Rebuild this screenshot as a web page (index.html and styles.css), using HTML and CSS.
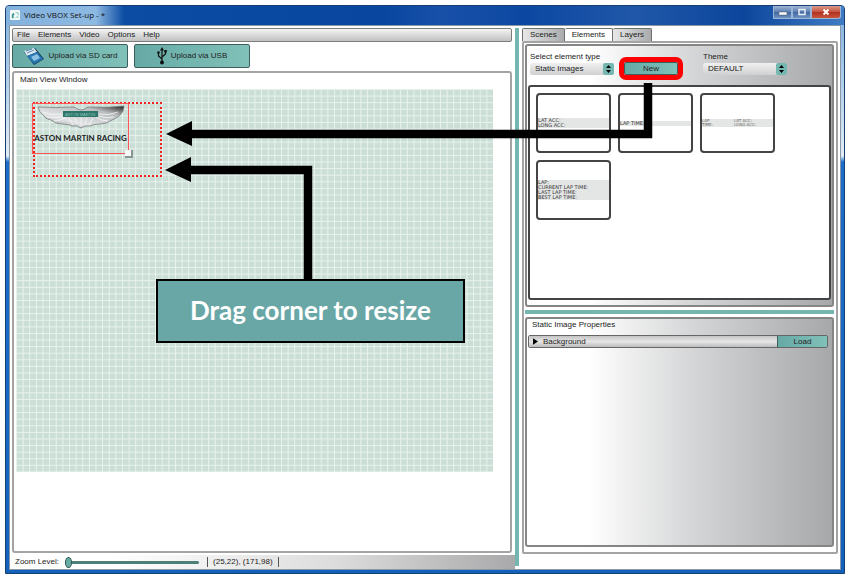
FILE: index.html
```html
<!DOCTYPE html>
<html lang="en">
<head>
  <meta charset="UTF-8">
  <meta name="viewport" content="width=device-width, initial-scale=1.0">
  <title>Video VBOX Set-up</title>
  <link rel="stylesheet" href="styles.css">
</head>
<body>
  <div class="window">
    <header class="titlebar">
      <svg class="app-icon" viewBox="0 0 11 11">
        <rect width="11" height="11" rx="1" fill="#f4fbfa"/>
        <path d="M2 9V5l2-2 1 2-1 1v3z" fill="#3f9a92"/>
        <path d="M6 3h3v3M6 9l2-2 1 2" fill="none" stroke="#7fc4bb"/>
      </svg>
      <h1>Video VBOX Set-up - *</h1>
      <div class="window-buttons">
        <button class="win-btn" aria-label="Minimize">
          <svg viewBox="0 0 10 8"><rect x="1" y="4" width="8" height="3" fill="#fff" stroke="#456" stroke-width=".5"/></svg>
        </button>
        <button class="win-btn" aria-label="Maximize">
          <svg viewBox="0 0 10 8"><rect x="2" y="1.500" width="6" height="5" fill="none" stroke="#e9eef5" stroke-width="1.500"/></svg>
        </button>
        <button class="win-btn close" aria-label="Close">
          <svg viewBox="0 0 10 8"><path d="M2.500 1.500l5 5m0-5l-5 5" stroke="#fff" stroke-width="1.800"/></svg>
        </button>
      </div>
    </header>

    <main class="client">
      <section class="left">
        <nav class="menu">
          <a href="#">File</a>
          <a href="#">Elements</a>
          <a href="#">Video</a>
          <a href="#">Options</a>
          <a href="#">Help</a>
        </nav>
        <div class="uploads">
          <button class="upload">
            <svg class="sd-icon" viewBox="0 0 22 19">
              <path d="M1 5L12 1l9 11-10 6z" fill="#16385c"/>
              <path d="M1 4L11 1l3 4-10 4z" fill="#dce9f2"/>
              <path d="M4 9l10-4 6 7-9 5z" fill="#2878b4"/>
              <path d="M8 10l6-3 3 4-6 3z" fill="#8fc3e4"/>
              <path d="M3 4l6-2M4 6l7-3" stroke="#3a6f9c" stroke-width=".8"/>
            </svg>
            Upload via SD card
          </button>
          <button class="upload">
            <svg class="usb-icon" viewBox="0 0 10 18">
              <path d="M5 2v13M5 12L1.500 9V6M5 10l3.500-3V5" fill="none" stroke="#111" stroke-width="1.200"/>
              <path d="M5 0l2 3.500H3z" fill="#111"/>
              <circle cx="5" cy="15.500" r="2" fill="#111"/>
              <circle cx="1.500" cy="5.500" r="1.300" fill="#111"/>
              <rect x="7.300" y="3" width="2.500" height="2.500" fill="#111"/>
            </svg>
            Upload via USB
          </button>
        </div>
        <div class="main-view">
          <h2>Main View Window</h2>
          <div class="canvas">
            <div class="resize-area"></div>
            <div class="element">
              <svg class="wings" viewBox="0 0 88 24">
                <defs>
                  <linearGradient id="wing" x1="0" x2="1" y1="1" y2="0">
                    <stop offset="0" stop-color="#8d9293"/>
                    <stop offset=".35" stop-color="#e2e4e5"/>
                    <stop offset=".75" stop-color="#b9bdbe"/>
                    <stop offset=".92" stop-color="#555"/>
                    <stop offset="1" stop-color="#111"/>
                  </linearGradient>
                </defs>
                <path d="M1 2Q18 3 36 2Q39 2 40 4Q44 6 48 4Q49 2 52 2Q70 3 87 1Q87 7 82 11Q78 14 75 15Q70 19 63 19Q56 19 53 21Q48 20 44 23Q40 20 35 21Q32 19 25 19Q18 19 14 15Q8 14 6 10Q2 7 1 2Z" fill="url(#wing)" stroke="#777d7e" stroke-width=".8"/>
                <path d="M5 7q10 4 20 2M10 12q9 2 16-1M17 16q7 0 12-4M81 7q-9 4-19 2M77 12q-8 2-15-1M71 16q-7 0-12-4M32 13l4 7M56 13l-4 7M44 13v8M38 13l2 6M50 13l-2 6" fill="none" stroke="#f7f8f8" stroke-width=".8"/>
                <rect x="26" y="6" width="35" height="6" fill="#2e756a"/>
                <text x="43" y="11" text-anchor="middle" class="badge-text">ASTON MARTIN</text>
              </svg>
              <span class="brand">ASTON MARTIN RACING</span>
            </div>
          </div>
        </div>
        <footer class="status">
          <label for="zoom">Zoom Level:</label>
          <input type="range" id="zoom" min="0" max="100" value="0">
          <output class="coords">(25,22), (171,98)</output>
        </footer>
      </section>

      <div class="divider"></div>

      <section class="right">
        <div class="tabs">
          <button class="tab">Scenes</button>
          <button class="tab active">Elements</button>
          <button class="tab">Layers</button>
        </div>
        <div class="panel">
          <div class="box elements-box">
            <div class="toolbar">
              <div class="field">
                <label for="elementType">Select element type</label>
                <span class="select">
                  <select id="elementType"><option>Static Images</option></select>
                  <svg viewBox="0 0 11 12"><path d="M5.500 2l2.500 3H3zM5.500 10L3 7h5z"/></svg>
                </span>
              </div>
              <button class="new-btn">New</button>
              <div class="field">
                <label for="theme">Theme</label>
                <span class="select">
                  <select id="theme"><option>DEFAULT</option></select>
                  <svg viewBox="0 0 11 12"><path d="M5.500 2l2.500 3H3zM5.500 10L3 7h5z"/></svg>
                </span>
              </div>
            </div>
            <ul class="gallery">
              <li><div class="strip">LAT ACC:<br>LONG ACC:</div></li>
              <li><div class="strip">LAP TIME:</div></li>
              <li><div class="strip two"><span>LAP<br>TIME:</span><span>LAT ACC:<br>LONG ACC:</span></div></li>
              <li><div class="strip">LAP:<br>CURRENT LAP TIME:<br>LAST LAP TIME:<br>BEST LAP TIME:</div></li>
            </ul>
          </div>
          <div class="splitter"></div>
          <div class="box props-box">
            <h2>Static Image Properties</h2>
            <div class="prop-row">
              <button class="prop-name"><svg viewBox="0 0 6 8"><path d="M0 0l6 4-6 4z"/></svg>Background</button>
              <button class="load-btn">Load</button>
            </div>
          </div>
        </div>
      </section>
    </main>
  </div>

  <!-- arrows and note over the window -->
  <svg class="arrows" viewBox="0 0 850 578" preserveAspectRatio="none">
    <path d="M648 83V134H190M308 281V170H190" fill="none" stroke="#000" stroke-width="8.500"/>
    <path d="M166 134l26-13v25zM165 170l26-13v25z"/>
  </svg>
  <div class="note">Drag corner to resize</div>
</body>
</html>
```
FILE: styles.css
```css
* {
  box-sizing: border-box;
}
body {
  margin: 0;
  padding: 5px 5px 4px;
  height: 100vh;
  position: relative;
  background: #fff;
  font-family: "Liberation Sans", Arial, sans-serif;
  font-size: 8px;
  line-height: 10px;
  color: #222;
}
button, select, input {
  font: inherit;
  color: inherit;
  margin: 0;
  padding: 0;
}
h1, h2 {
  margin: 0;
  font-size: 8px;
  font-weight: normal;
}
.window {
  height: 100%;
  display: flex;
  flex-direction: column;
  padding: 0 3px 3px;
  border: 1px solid #17406f;
  border-radius: 4px 4px 0 0;
  background: linear-gradient(#7fb0de 0, #e3edf7 150px, #1c6dca 156px, #1262bd 100%);
}
.titlebar {
  display: flex;
  align-items: center;
  gap: 4px;
  height: 19px;
  margin: 0 -3px;
  padding-left: 4px;
  padding-bottom: 2px;
  border-radius: 3px 3px 0 0;
  background: linear-gradient(90deg, #83b2dd 0, #8db9e2 90px, #0c4ca3 118px, #0846a0 45%, #1850a8 52%, #0c48a2 62%, #2057a8 75%, #0b469c 88%, #3f7cc4 100%);
}
.titlebar h1 {
  font-family: "Open Sans", "Noto Sans", sans-serif;
  color: #111;
}
.app-icon {
  width: 10px;
  height: 10px;
}
.window-buttons {
  display: flex;
  align-self: flex-start;
  margin-left: auto;
  margin-right: 3px;
}
.win-btn {
  width: 19px;
  height: 13px;
  display: flex;
  align-items: center;
  justify-content: center;
  border: 1px solid #9cb6d8;
  border-top: 0;
  background: linear-gradient(#9fb5d4, #5d7fb1 50%, #3f669f 50%, #6f92c2);
}
.win-btn svg {
  width: 10px;
  height: 8px;
}
.win-btn.close {
  width: 30px;
  border-radius: 0 0 3px 0;
  background: linear-gradient(#dd9a8c, #c4503c 50%, #b03020 50%, #c8553c);
}
.client {
  flex: 1;
  min-height: 0;
  display: grid;
  grid-template-columns: minmax(0, 505fr) 4px minmax(0, 321fr);
  border: 1px solid #8a97a5;
  background: #fff;
}
.left {
  display: flex;
  flex-direction: column;
  min-height: 0;
  padding-top: 2px;
}
.menu {
  display: flex;
  gap: 8px;
  height: 14px;
  margin: 0 3px 0 2px;
  padding: 1px 4px;
  border: 1px solid #7c7c7c;
  border-radius: 2px;
  background: linear-gradient(#f5f5f5, #d0d0d0 70%, #c2c2c2);
}
.menu a {
  color: #222;
  text-decoration: none;
}
.uploads {
  display: flex;
  gap: 6px;
  margin: 2px 2px 3px;
}
.upload {
  display: flex;
  align-items: center;
  justify-content: center;
  gap: 4px;
  width: 116px;
  height: 24px;
  border: 1px solid #3d5f5c;
  border-radius: 2px;
  background: linear-gradient(90deg, #67a9a5, #80c2b9);
}
.sd-icon {
  width: 22px;
  height: 19px;
}
.usb-icon {
  width: 10px;
  height: 18px;
}
.main-view {
  flex: 1;
  min-height: 0;
  margin: 0 3px 2px 2px;
  padding: 2px;
  border: 2px solid #a3a3a3;
  border-radius: 3px;
}
.main-view h2 {
  padding-left: 4px;
  margin-bottom: 4px;
}
/* 72 x 58 cell grid */
.canvas {
  position: relative;
  width: 97%;
  aspect-ratio: 474 / 380;
  background-color: #cbdfd7;
  background-image:
    linear-gradient(90deg, #e9f3ee 1px, transparent 1px),
    linear-gradient(#e9f3ee 1px, transparent 1px);
  background-size: calc(100% / 72) calc(100% / 58);
}
.element {
  position: absolute;
  left: 16px;
  top: 14px;
  width: 97px;
  height: 51px;
  display: flex;
  flex-direction: column;
  align-items: center;
  border: 1px solid #f55;
}
.element::after {
  content: "";
  position: absolute;
  right: -5px;
  bottom: -5px;
  width: 6px;
  height: 6px;
  border: solid #8b9591;
  border-width: 0 2px 2px 0;
  background: #f4f8f6;
}
.wings {
  width: 88px;
  height: 24px;
  margin-top: 1px;
}
.badge-text {
  font-size: 4px;
  fill: #8cc5b8;
}
.brand {
  margin-top: 4px;
  font-family: Lato, sans-serif;
  font-weight: bold;
  font-size: 8px;
  white-space: nowrap;
  color: #222;
}
.resize-area {
  position: absolute;
  left: 17px;
  top: 13px;
  width: 129px;
  height: 75px;
  border: 2px dotted #f02222;
}
.status {
  display: flex;
  align-items: center;
  height: 14px;
  padding-left: 5px;
  background: linear-gradient(90deg, #fff 20%, #dcdcdc 65%, #a9a9ab);
}
.status input {
  -webkit-appearance: none;
  appearance: none;
  width: 134px;
  height: 12px;
  margin: 0 8px 0 6px;
  background: none;
}
.status input::-webkit-slider-runnable-track {
  height: 3px;
  border-radius: 2px;
  background: #4d7f78;
}
.status input::-webkit-slider-thumb {
  -webkit-appearance: none;
  width: 7px;
  height: 11px;
  margin-top: -4px;
  border: 1px solid #2f5854;
  border-radius: 50%;
  background: #65aaa3;
}
.coords {
  padding: 0 5px;
  border: solid #555;
  border-width: 0 1px;
}
.divider {
  margin: 2px 0 3px;
  background: #74b7b0;
}
.right {
  display: flex;
  flex-direction: column;
  min-height: 0;
  padding: 2px 2px 15px 3px;
}
.tabs {
  display: flex;
  height: 13px;
}
.tab {
  padding: 0 7px;
  border: 1px solid #6f6f6f;
  border-bottom: 0;
  border-left-width: 0;
  border-radius: 2px 2px 0 0;
  background: linear-gradient(90deg, #e8e8e8, #a9abad);
}
.tab:first-child {
  border-left-width: 1px;
}
.tab.active {
  background: #fff;
}
.panel {
  flex: 1;
  min-height: 0;
  display: flex;
  flex-direction: column;
  padding: 1px 2px 5px 1px;
  border: 2px solid #a3a3a3;
  border-radius: 2px;
}
.box {
  min-height: 0;
  border: 2px solid #858585;
  border-radius: 3px;
  background: linear-gradient(90deg, #fff 20%, #d4d5d6 55%, #a7a8aa);
}
.elements-box {
  flex: 261;
  display: flex;
  flex-direction: column;
  padding: 6px 1px 5px;
}
.toolbar {
  display: flex;
  align-items: flex-end;
  padding: 0 2px;
  margin-bottom: 10px;
}
.field {
  display: flex;
  flex-direction: column;
  gap: 1px;
}
.select {
  position: relative;
  width: 84px;
  height: 12px;
}
.select select {
  -webkit-appearance: none;
  appearance: none;
  display: block;
  width: 100%;
  height: 12px;
  padding-left: 5px;
  border: 0;
  border-radius: 2px;
  background: linear-gradient(#f0f0f0, #cfd0d1);
}
.select svg {
  position: absolute;
  right: 0;
  top: 0;
  width: 11px;
  height: 12px;
  border-radius: 2px;
  background: #74b7b0;
  pointer-events: none;
}
/* ring marks the button to press */
.new-btn {
  width: 54px;
  height: 13px;
  margin: 0 25px 0 10px;
  border: 1px solid #3d5f5c;
  background: linear-gradient(90deg, #67a9a5, #80c2b9);
  outline: 5px solid #f00;
  border-radius: 2px;
}
.gallery {
  flex: 1;
  display: grid;
  grid-template-columns: repeat(3, 75px);
  grid-auto-rows: 60px;
  gap: 7px;
  margin: 0;
  padding: 6px;
  list-style: none;
  border: 2px solid #444;
  border-radius: 3px;
  background: #fff;
}
.gallery li {
  display: flex;
  flex-direction: column;
  justify-content: center;
  border: 2px solid #444;
  border-radius: 4px;
}
.strip {
  background: #e4e6e5;
  font-family: "DejaVu Sans", sans-serif;
  font-size: 5px;
  line-height: 5px;
  color: #333;
}
.strip.two {
  display: grid;
  grid-template-columns: 32px 1fr;
  font-size: 4px;
  line-height: 4px;
  color: #666;
}
.splitter {
  height: 4px;
  margin: 3px 0;
  background: #74b7b0;
}
.props-box {
  flex: 234;
  padding: 1px 4px 2px 1px;
}
.props-box h2 {
  padding-left: 4px;
  margin-bottom: 5px;
}
.prop-row {
  display: flex;
  height: 13px;
  border: 1px solid #666;
  border-radius: 2px;
}
.prop-name {
  flex: 1;
  display: flex;
  align-items: center;
  gap: 5px;
  padding-left: 4px;
  border: 0;
  background: linear-gradient(#c4c4c4, #e6e6e6 50%, #bdbdbd);
}
.prop-name svg {
  width: 5px;
  height: 7px;
}
.load-btn {
  width: 50px;
  border: 0;
  border-left: 1px solid #3d5f5c;
  background: linear-gradient(90deg, #67a9a5, #80c2b9);
}
.arrows {
  position: absolute;
  inset: 0;
  width: 100%;
  height: 100%;
  pointer-events: none;
}
.note {
  position: absolute;
  left: 156px;
  top: 279px;
  padding: 13px 32px 15px;
  border: 2px solid #000;
  background: #68a7a6;
  font-family: Lato, Calibri, sans-serif;
  font-weight: bold;
  font-size: 26px;
  line-height: 32px;
  color: #fff;
  white-space: nowrap;
}
```
